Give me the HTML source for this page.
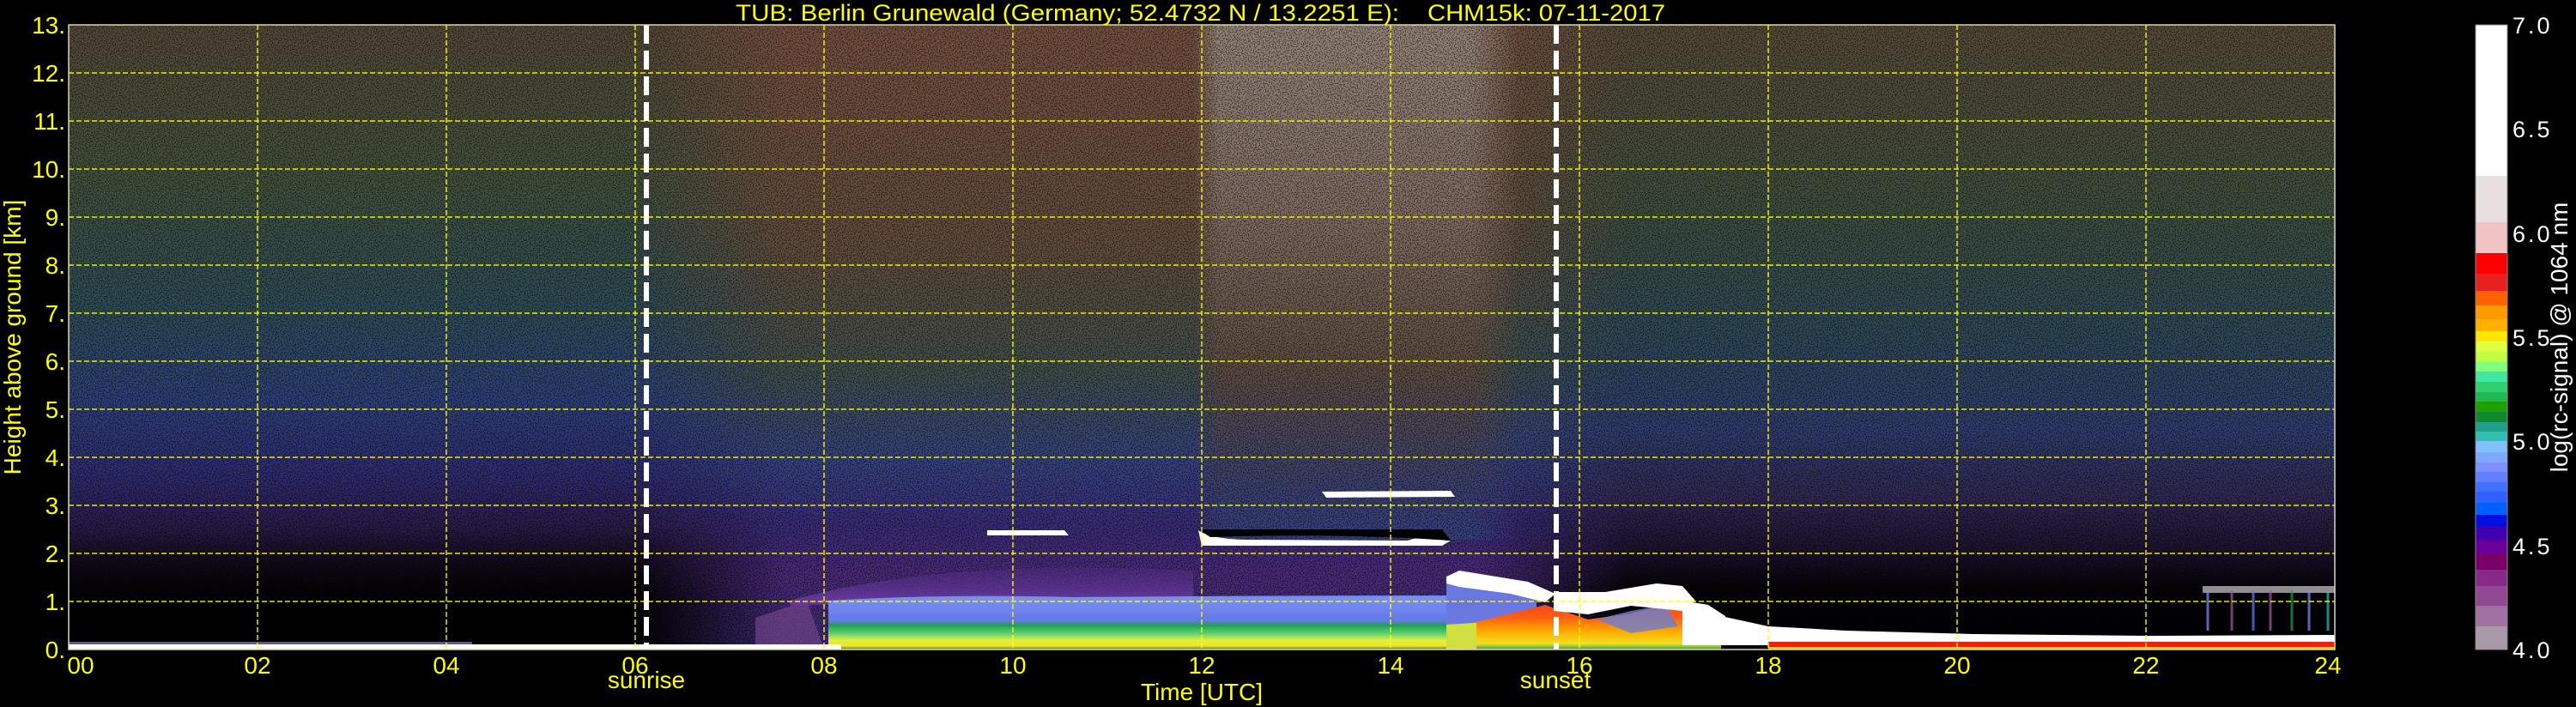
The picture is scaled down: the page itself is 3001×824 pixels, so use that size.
<!DOCTYPE html>
<html><head><meta charset="utf-8"><style>
html,body{margin:0;padding:0;background:#000;}
svg{display:block;font-family:"Liberation Sans",sans-serif;}
</style></head><body>
<svg width="3001" height="824" viewBox="0 0 3001 824" xmlns="http://www.w3.org/2000/svg">
<defs>
<linearGradient id="gL" x1="0" y1="29" x2="0" y2="757" gradientUnits="userSpaceOnUse">
<stop offset="0" stop-color="#544838"/>
<stop offset="0.25" stop-color="#42503c"/>
<stop offset="0.45" stop-color="#2e4c56"/>
<stop offset="0.6" stop-color="#2e4078"/>
<stop offset="0.72" stop-color="#2e2c70"/>
<stop offset="0.8" stop-color="#2c1c4c"/>
<stop offset="0.86" stop-color="#120a1a"/>
<stop offset="0.92" stop-color="#000"/>
<stop offset="1" stop-color="#000"/>
</linearGradient>
<linearGradient id="gM" x1="0" y1="29" x2="0" y2="757" gradientUnits="userSpaceOnUse">
<stop offset="0" stop-color="#745040"/>
<stop offset="0.35" stop-color="#624c3c"/>
<stop offset="0.55" stop-color="#404e4a"/>
<stop offset="0.7" stop-color="#36427e"/>
<stop offset="0.8" stop-color="#3a2c78"/>
<stop offset="0.88" stop-color="#4a2a78"/>
<stop offset="1" stop-color="#3a2a70"/>
</linearGradient>
<linearGradient id="gW" x1="0" y1="29" x2="0" y2="757" gradientUnits="userSpaceOnUse">
<stop offset="0" stop-color="#948478"/>
<stop offset="0.3" stop-color="#806c62"/>
<stop offset="0.55" stop-color="#5c4c42"/>
<stop offset="0.75" stop-color="#3a4070"/>
<stop offset="1" stop-color="#3040a0"/>
</linearGradient>
<linearGradient id="gR" x1="0" y1="29" x2="0" y2="757" gradientUnits="userSpaceOnUse">
<stop offset="0" stop-color="#564a38"/>
<stop offset="0.3" stop-color="#3e4e3e"/>
<stop offset="0.5" stop-color="#2e4858"/>
<stop offset="0.65" stop-color="#303c6e"/>
<stop offset="0.76" stop-color="#302852"/>
<stop offset="0.84" stop-color="#1e1230"/>
<stop offset="0.9" stop-color="#050308"/>
<stop offset="1" stop-color="#000"/>
</linearGradient>
<linearGradient id="hM" x1="0" y1="0" x2="1" y2="0">
<stop offset="0" stop-color="#fff" stop-opacity="0"/>
<stop offset="0.15" stop-color="#fff" stop-opacity="1"/>
<stop offset="0.85" stop-color="#fff" stop-opacity="1"/>
<stop offset="1" stop-color="#fff" stop-opacity="0"/>
</linearGradient>
<mask id="mM"><rect x="740" y="29" width="1160" height="728" fill="url(#hM)"/></mask>
<linearGradient id="hW" x1="0" y1="0" x2="1" y2="0">
<stop offset="0" stop-color="#fff" stop-opacity="0"/>
<stop offset="0.08" stop-color="#fff" stop-opacity="1"/>
<stop offset="0.85" stop-color="#fff" stop-opacity="1"/>
<stop offset="1" stop-color="#fff" stop-opacity="0"/>
</linearGradient>
<mask id="mW"><rect x="1390" y="29" width="380" height="600" fill="url(#hW)"/></mask>
<linearGradient id="aer" x1="0" y1="690" x2="0" y2="757" gradientUnits="userSpaceOnUse">
<stop offset="0" stop-color="#5a70d8"/>
<stop offset="0.1" stop-color="#7a90f0"/>
<stop offset="0.5" stop-color="#6478e8"/>
<stop offset="0.58" stop-color="#20a050"/>
<stop offset="0.72" stop-color="#60d070"/>
<stop offset="0.84" stop-color="#e0f040"/>
<stop offset="0.94" stop-color="#f8e020"/>
<stop offset="1" stop-color="#208030"/>
</linearGradient>
<linearGradient id="eve" x1="0" y1="700" x2="0" y2="757" gradientUnits="userSpaceOnUse">
<stop offset="0" stop-color="#f04020"/>
<stop offset="0.35" stop-color="#ff6010"/>
<stop offset="0.65" stop-color="#ffb000"/>
<stop offset="0.88" stop-color="#f0e020"/>
<stop offset="1" stop-color="#30a060"/>
</linearGradient>
<linearGradient id="mag" x1="0" y1="655" x2="0" y2="700" gradientUnits="userSpaceOnUse">
<stop offset="0" stop-color="#4a2a80" stop-opacity="0.3"/>
<stop offset="1" stop-color="#6a3aa0" stop-opacity="0.9"/>
</linearGradient>
<filter id="spk" x="0" y="0" width="100%" height="100%">
<feTurbulence type="fractalNoise" baseFrequency="0.7" numOctaves="1" seed="3"/>
<feColorMatrix type="matrix" values="0 0 0 0 0  0 0 0 0 0  0 0 0 0 0  0 0 0 -6 3.2"/>
</filter>
</defs>

<rect x="80" y="29" width="2640" height="728" fill="url(#gL)"/>
<rect x="1700" y="29" width="1020" height="728" fill="url(#gR)"/>
<rect x="740" y="29" width="1160" height="728" fill="url(#gM)" mask="url(#mM)"/>
<rect x="1390" y="29" width="380" height="600" fill="url(#gW)" mask="url(#mW)"/>
<rect x="80" y="29" width="2640" height="728" filter="url(#spk)" opacity="0.5"/>

<!-- morning aerosol -->
<path d="M880 757 L880 720 L940 700 L960 757 Z" fill="#7a4a90" opacity="0.6"/>
<path d="M920 700 Q1100 650 1390 665 L1390 700 L920 705 Z" fill="url(#mag)"/>
<path d="M965 757 L965 700 Q1100 692 1250 696 Q1450 694 1690 694 L1690 757 Z" fill="url(#aer)"/>
<!-- evening -->
<path d="M1685 680 L1790 690 L1790 728 L1685 728 Z" fill="#6a78e0"/>
<path d="M1685 728 L1780 722 L1790 757 L1685 757 Z" fill="#d0e040"/>
<path d="M1720 757 L1720 725 L1800 705 L1850 722 L1900 715 L1960 700 L2005 745 L2005 757 Z" fill="url(#eve)"/>
<path d="M1860 722 L1900 712 L1940 705 L1955 730 L1900 738 Z" fill="#6a80d0" opacity="0.8"/>
<path d="M1685 672 L1700 665 L1780 678 L1812 692 L1800 702 L1760 692 L1700 684 L1685 680 Z" fill="#fff"/>
<path d="M1810 690 L1870 690 L1900 685 L1930 680 L1960 683 L1975 700 L1960 712 L1900 706 L1850 716 L1810 712 Z" fill="#fff"/>
<path d="M1960 700 L1990 705 L2010 718 L2010 752 L1960 752 Z" fill="#fff"/>
<!-- night ground layers -->
<path d="M2005 718 L2060 730 Q2100 732 2150 735 L2300 739 L2500 741 L2720 740 L2720 752 L2005 752 Z" fill="#fff"/>
<rect x="2060" y="748" width="660" height="6" fill="#f02010"/>
<rect x="2060" y="754" width="660" height="3" fill="#f0c020"/>
<rect x="2566" y="683" width="154" height="8" fill="#f0e8f0" opacity="0.6"/>
<g stroke-width="3" opacity="0.7">
<line x1="2572" y1="688" x2="2572" y2="735" stroke="#8090ff"/>
<line x1="2600" y1="688" x2="2600" y2="735" stroke="#a060a0"/>
<line x1="2625" y1="688" x2="2625" y2="735" stroke="#6080ff"/>
<line x1="2645" y1="688" x2="2645" y2="735" stroke="#a060a0"/>
<line x1="2670" y1="688" x2="2670" y2="735" stroke="#20a050"/>
<line x1="2690" y1="688" x2="2690" y2="735" stroke="#8090ff"/>
<line x1="2712" y1="688" x2="2712" y2="735" stroke="#30c0b0"/>
</g>
<rect x="80" y="751" width="900" height="6" fill="#fff"/>
<rect x="80" y="748" width="470" height="3" fill="#9080c0" opacity="0.7"/>

<!-- clouds -->
<path d="M1150 618 L1240 618 L1245 624 L1150 624 Z" fill="#fff"/>
<path d="M1396 618 Q1410 628 1450 629 L1640 630 Q1660 622 1685 630 L1690 630 L1680 636 L1400 636 Z" fill="#fff"/>
<path d="M1396 617 L1680 617 L1690 630 L1640 627 Q1520 622 1410 626 Z" fill="#000"/>
<path d="M1540 573 L1690 572 L1695 579 L1545 580 Z" fill="#fff"/>

<g stroke="#ffff00" stroke-width="1.5" stroke-dasharray="6,3" opacity="0.9">
<line x1="80" y1="701" x2="2720" y2="701"/><line x1="80" y1="645" x2="2720" y2="645"/>
<line x1="80" y1="589" x2="2720" y2="589"/><line x1="80" y1="533" x2="2720" y2="533"/>
<line x1="80" y1="477" x2="2720" y2="477"/><line x1="80" y1="421" x2="2720" y2="421"/>
<line x1="80" y1="365" x2="2720" y2="365"/><line x1="80" y1="309" x2="2720" y2="309"/>
<line x1="80" y1="253" x2="2720" y2="253"/><line x1="80" y1="197" x2="2720" y2="197"/>
<line x1="80" y1="141" x2="2720" y2="141"/><line x1="80" y1="85" x2="2720" y2="85"/>
<line x1="300" y1="29" x2="300" y2="757"/><line x1="520" y1="29" x2="520" y2="757"/>
<line x1="740" y1="29" x2="740" y2="757"/><line x1="960" y1="29" x2="960" y2="757"/>
<line x1="1180" y1="29" x2="1180" y2="757"/><line x1="1400" y1="29" x2="1400" y2="757"/>
<line x1="1620" y1="29" x2="1620" y2="757"/><line x1="1840" y1="29" x2="1840" y2="757"/>
<line x1="2060" y1="29" x2="2060" y2="757"/><line x1="2280" y1="29" x2="2280" y2="757"/>
<line x1="2500" y1="29" x2="2500" y2="757"/>
</g>
<g stroke="#fff" stroke-width="6" stroke-dasharray="22,8">
<line x1="753" y1="29" x2="753" y2="757"/>
<line x1="1813" y1="29" x2="1813" y2="757"/>
</g>
<rect x="80" y="29" width="2640" height="728" fill="none" stroke="#d8d8b0" stroke-width="1.5"/>

<text x="857" y="24" fill="#ffff00" font-size="27" textLength="773" lengthAdjust="spacingAndGlyphs">TUB: Berlin Grunewald (Germany; 52.4732 N / 13.2251 E):</text>
<text x="1663" y="24" fill="#ffff00" font-size="27" textLength="277" lengthAdjust="spacingAndGlyphs">CHM15k: 07-11-2017</text>

<g fill="#ffff00" font-size="28" text-anchor="end">
<text x="76" y="767">0.</text><text x="76" y="711">1.</text><text x="76" y="655">2.</text>
<text x="76" y="599">3.</text><text x="76" y="543">4.</text><text x="76" y="487">5.</text>
<text x="76" y="431">6.</text><text x="76" y="375">7.</text><text x="76" y="319">8.</text>
<text x="76" y="263">9.</text><text x="76" y="207">10.</text><text x="76" y="151">11.</text>
<text x="76" y="95">12.</text><text x="76" y="39">13.</text>
</g>
<text transform="translate(24,393) rotate(-90)" fill="#ffff00" font-size="28" text-anchor="middle">Height above ground [km]</text>
<g fill="#ffff00" font-size="28" text-anchor="middle">
<text x="94" y="785">00</text><text x="300" y="785">02</text><text x="520" y="785">04</text>
<text x="740" y="785">06</text><text x="960" y="785">08</text><text x="1180" y="785">10</text>
<text x="1400" y="785">12</text><text x="1620" y="785">14</text><text x="1840" y="785">16</text>
<text x="2060" y="785">18</text><text x="2280" y="785">20</text><text x="2500" y="785">22</text>
<text x="2712" y="785">24</text>
<text x="753" y="802">sunrise</text><text x="1812" y="802">sunset</text>
<text x="1400" y="816">Time [UTC]</text>
</g>

<g>
<rect x="2884" y="29" width="37" height="176" fill="#ffffff"/>
<rect x="2884" y="205" width="37" height="54" fill="#e8e0e0"/>
<rect x="2884" y="259" width="37" height="36" fill="#f0c4c4"/>
<rect x="2884" y="295" width="37" height="24" fill="#ff0000"/>
<rect x="2884" y="319" width="37" height="20" fill="#e82020"/>
<rect x="2884" y="339" width="37" height="17" fill="#ff6000"/>
<rect x="2884" y="356" width="37" height="16" fill="#ff9900"/>
<rect x="2884" y="372" width="37" height="14" fill="#ffb000"/>
<rect x="2884" y="386" width="37" height="12" fill="#ffe600"/>
<rect x="2884" y="398" width="37" height="12" fill="#e0ff40"/>
<rect x="2884" y="410" width="37" height="12" fill="#c0ff40"/>
<rect x="2884" y="422" width="37" height="11" fill="#80ff80"/>
<rect x="2884" y="433" width="37" height="12" fill="#40e8a0"/>
<rect x="2884" y="445" width="37" height="12" fill="#30d070"/>
<rect x="2884" y="457" width="37" height="11" fill="#20b850"/>
<rect x="2884" y="468" width="37" height="12" fill="#20a000"/>
<rect x="2884" y="480" width="37" height="12" fill="#108830"/>
<rect x="2884" y="492" width="37" height="11" fill="#20a088"/>
<rect x="2884" y="503" width="37" height="11" fill="#30c0b0"/>
<rect x="2884" y="514" width="37" height="13" fill="#80c0ff"/>
<rect x="2884" y="527" width="37" height="12" fill="#80a8ff"/>
<rect x="2884" y="539" width="37" height="11" fill="#8090ff"/>
<rect x="2884" y="550" width="37" height="12" fill="#6080ff"/>
<rect x="2884" y="562" width="37" height="11" fill="#4070ff"/>
<rect x="2884" y="573" width="37" height="13" fill="#3060ff"/>
<rect x="2884" y="586" width="37" height="14" fill="#0060ff"/>
<rect x="2884" y="600" width="37" height="14" fill="#0010e0"/>
<rect x="2884" y="614" width="37" height="16" fill="#4000b0"/>
<rect x="2884" y="630" width="37" height="16" fill="#6a0098"/>
<rect x="2884" y="646" width="37" height="18" fill="#7a0068"/>
<rect x="2884" y="664" width="37" height="19" fill="#882888"/>
<rect x="2884" y="683" width="37" height="23" fill="#904890"/>
<rect x="2884" y="706" width="37" height="24" fill="#a070a0"/>
<rect x="2884" y="730" width="37" height="27" fill="#a898a8"/>
<rect x="2884" y="29" width="37" height="728" fill="none" stroke="#888" stroke-width="1"/>
</g>
<g fill="#ffffff" font-size="27" letter-spacing="3">
<text x="2927" y="39">7.0</text><text x="2927" y="160">6.5</text><text x="2927" y="282">6.0</text>
<text x="2927" y="403">5.5</text><text x="2927" y="524">5.0</text><text x="2927" y="646">4.5</text>
<text x="2927" y="767">4.0</text>
</g>
<text transform="translate(2991,393) rotate(-90)" fill="#ffffff" font-size="28" text-anchor="middle">log(rc-signal) @ 1064 nm</text>
</svg>
</body></html>
